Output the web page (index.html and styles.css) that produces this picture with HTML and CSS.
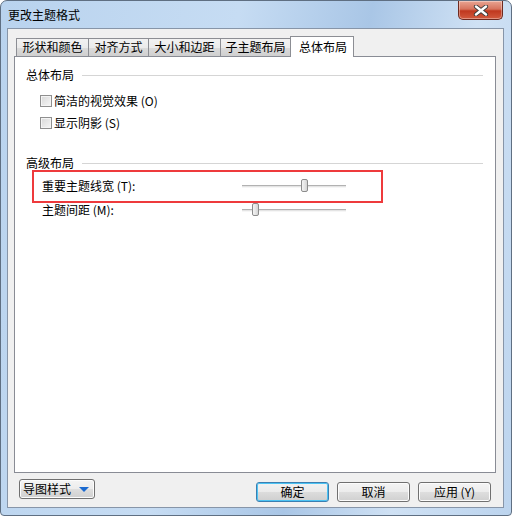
FILE: index.html
```html
<!DOCTYPE html>
<html>
<head>
<meta charset="utf-8">
<link rel="stylesheet" href="styles.css">
</head>
<body>
<div class="window">
  <div class="titlebar">
    <span class="title">更改主题格式</span>
    <div class="close">
      <svg width="16" height="11" viewBox="0 0 16 11">
        <path d="M3 1.5 L13 9.5 M13 1.5 L3 9.5" stroke="#3a3a3a" stroke-width="4.2" stroke-linecap="round"/>
        <path d="M3 1.5 L13 9.5 M13 1.5 L3 9.5" stroke="#ffffff" stroke-width="2.4" stroke-linecap="round"/>
      </svg>
    </div>
  </div>
  <div class="client">
    <div class="tabs">
      <div class="tab w72">形状和颜色</div>
      <div class="tab w60">对齐方式</div>
      <div class="tab w72">大小和边距</div>
      <div class="tab w70">子主题布局</div>
      <div class="tab active">总体布局</div>
    </div>
    <div class="panel">
      <div class="group-head"><span>总体布局</span><div class="rule"></div></div>
      <div class="check-row first"><span class="box"></span><span>简洁的视觉效果 (O)</span></div>
      <div class="check-row"><span class="box"></span><span>显示阴影 (S)</span></div>
      <div class="group-head second"><span>高级布局</span><div class="rule"></div></div>
      <div class="slider-row first">
        <span class="slabel">重要主题线宽 (T):</span>
        <div class="track"><span class="thumb t1"></span></div>
      </div>
      <div class="slider-row">
        <span class="slabel">主题间距 (M):</span>
        <div class="track"><span class="thumb t2"></span></div>
      </div>
      <div class="highlight"></div>
    </div>
    <div class="bottom">
      <div class="btn style-btn">导图样式<span class="tri"></span></div>
      <div class="right-btns">
        <div class="btn default">确定</div>
        <div class="btn">取消</div>
        <div class="btn">应用 (Y)</div>
      </div>
    </div>
  </div>
</div>
</body>
</html>
```
FILE: styles.css
```css
* { box-sizing: border-box; }
html, body { margin: 0; padding: 0; }
body {
  width: 512px;
  height: 516px;
  overflow: hidden;
  font-family: "Noto Sans CJK SC", "Liberation Sans", sans-serif;
  font-size: 12px;
  color: #000;
}
.window {
  width: 512px;
  height: 516px;
  border: 1px solid #5f6f82;
  border-radius: 7px 7px 4px 4px;
  background: linear-gradient(100deg, #b9d3ee 0%, #c6dcf3 40%, #a9c6e6 62%, #cfe1f4 80%, #bcd4ee 100%);
  display: flex;
  flex-direction: column;
  position: relative;
}
.titlebar {
  height: 27px;
  display: flex;
  align-items: center;
  padding-left: 7px;
  position: relative;
}
.title {
  line-height: 16px;
  margin-top: 1px;
  color: #000;
}
.close {
  position: absolute;
  right: 8px;
  top: 0;
  width: 45px;
  height: 19px;
  border: 1px solid #6e2a20;
  border-top: none;
  border-radius: 0 0 5px 5px;
  background: linear-gradient(#e9a593 0%, #d6735d 45%, #c0381f 55%, #d25a3e 100%);
  display: flex;
  align-items: center;
  justify-content: center;
  box-shadow: inset 0 0 0 1px rgba(255,255,255,0.35);
}
.client {
  margin: 0 7px 7px 6px;
  height: 480px;
  border: 1px solid #8795a8;
  background: #f0f0f0;
  padding: 7px 7px 0 6px;
  display: flex;
  flex-direction: column;
}
.tabs {
  height: 20px;
  display: flex;
  align-items: flex-end;
  padding-left: 2px;
  position: relative;
  z-index: 2;
}
.tab {
  height: 18px;
  border: 1px solid #8c8e94;
  border-bottom: none;
  margin-right: 0;
  background: linear-gradient(#f2f2f2 0%, #ebebeb 50%, #dcdcdc 51%, #cfcfcf 100%);
  line-height: 16px;
  text-align: center;
  margin-left: -1px;
}
.tab:first-child { margin-left: 0; }
.w72 { width: 73px; }
.w60 { width: 61px; }
.w70 { width: 71px; }
.tab.active {
  width: 64px;
  height: 21px;
  margin-bottom: -1px;
  background: #fff;
  line-height: 19px;
  padding-left: 2px;
}
.panel {
  width: 482px;
  height: 417px;
  border: 1px solid #898c95;
  background: #fff;
  padding: 10px 12px 0 11px;
  position: relative;
}
.group-head {
  display: flex;
  align-items: center;
  height: 16px;
  line-height: 16px;
}
.group-head.second { margin-top: 24px; }
.rule {
  flex: 1;
  height: 1px;
  background: #d5d5d5;
  margin-left: 8px;
  margin-top: 1px;
}
.check-row {
  display: flex;
  align-items: center;
  height: 16px;
  line-height: 16px;
  padding-left: 14px;
  margin-top: 6px;
}
.check-row.first { margin-top: 10px; }
.box {
  width: 12px;
  height: 12px;
  border: 1px solid #8f8f8f;
  background: linear-gradient(135deg, #d8d8d8, #f6f6f6);
  box-shadow: inset 0 0 0 1px #f4f4f4;
  margin-right: 2px;
}
.slider-row {
  display: flex;
  align-items: center;
  height: 16px;
  line-height: 16px;
  padding-left: 16px;
  margin-top: 8px;
}
.slider-row.first { margin-top: 7px; }
.slabel { width: 200px; }
.track {
  width: 104px;
  height: 3px;
  background: #e4e4e4;
  border-top: 1px solid #b2b2b2;
  border-bottom: 1px solid #f6f6f6;
  position: relative;
}
.thumb {
  position: absolute;
  top: -7px;
  width: 7px;
  height: 13px;
  border: 1px solid #8c8c8c;
  border-radius: 2px;
  background: linear-gradient(90deg, #f4f4f4, #e6e6e6 50%, #d4d4d4);
}
.t1 { left: 59px; }
.t2 { left: 10px; }
.highlight {
  position: absolute;
  left: 17px;
  top: 113px;
  width: 351px;
  height: 33px;
  border: 2px solid #ee3a3c;
}
.bottom {
  display: flex;
  justify-content: space-between;
  align-items: flex-start;
  padding: 6px 5px 0 5px;
}
.btn {
  height: 20px;
  width: 73px;
  border: 1px solid #707070;
  border-radius: 3px;
  background: linear-gradient(#f4f4f4 0%, #ececec 50%, #dedede 51%, #d0d0d0 100%);
  box-shadow: inset 0 0 0 1px #fcfcfc;
  text-align: center;
  line-height: 18px;
}
.style-btn {
  width: 76px;
  display: flex;
  align-items: center;
  padding-left: 3px;
  text-align: left;
}
.tri {
  width: 0;
  height: 0;
  border-left: 5px solid transparent;
  border-right: 5px solid transparent;
  border-top: 5px solid #1c6ad0;
  margin-left: 8px;
  margin-top: 1px;
}
.right-btns {
  display: flex;
  gap: 8px;
  margin-top: 3px;
}
.btn.default {
  border-color: #3c7fb1;
  background: linear-gradient(#f2f2f2 0%, #eaeaea 50%, #dcdcdc 51%, #cfcfcf 100%);
  box-shadow: inset 0 0 0 1px #4cc3f3;
}
```
